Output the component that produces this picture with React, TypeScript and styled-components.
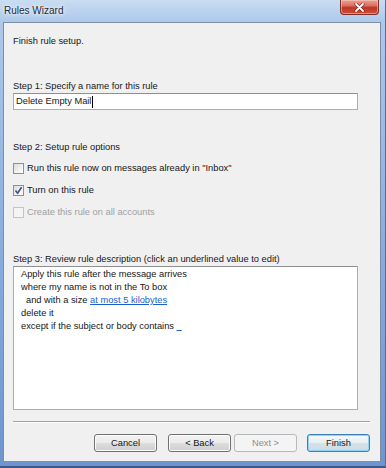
import styled, { createGlobalStyle } from 'styled-components';

const GlobalStyle = createGlobalStyle`
    html, body {
        margin: 0;
        padding: 0;
        background: #ffffff;
    }
    body {
        font-family: "Liberation Sans", Arial, sans-serif;
    }
`;

const Window = styled.div`
    width: 386px;
    height: 468px;
    box-sizing: border-box;
    display: flex;
    flex-flow: column nowrap;
    background: linear-gradient(180deg, #c9ddf2 0px, #adc8ea 22px, #84a9dc 60%, #6d95cf 100%);
    border-right: 1px solid #4f6f9e;
    border-bottom: 2px solid #3d5a86;
    padding: 0 4px 4px 3px;
`;

const TitleBar = styled.div`
    height: 22px;
    display: flex;
    align-items: flex-start;
    justify-content: space-between;
    flex-shrink: 0;
`;

const Title = styled.span`
    font-size: 10px;
    color: #1e2a3a;
    margin: 5px 0 0 1px;
    text-shadow: 0 0 6px #ffffff, 0 0 3px #ffffff;
`;

const CloseButton = styled.div`
    width: 39px;
    height: 15px;
    margin-right: 2px;
    box-sizing: border-box;
    border: 1px solid #7a2f28;
    border-top: none;
    border-radius: 0 0 4px 4px;
    background: linear-gradient(180deg, #e9a497 0%, #d9705f 40%, #c0352a 55%, #cf5034 100%);
    box-shadow: inset 0 0 0 1px rgba(255, 210, 200, 0.5);
    display: flex;
    align-items: center;
    justify-content: center;
`;

const Client = styled.div`
    flex: 1;
    display: flex;
    flex-flow: column nowrap;
    background: #f0f0f0;
    border: 1px solid #7d8ea6;
    padding: 0 9px 0 9px;
    font-size: 9.3px;
    color: #161616;
`;

const Text = styled.div<{ $top: number }>`
    margin-top: ${(p) => p.$top}px;
    line-height: 13px;
    white-space: nowrap;
`;

const NameInput = styled.div`
    margin-top: 0;
    width: 345px;
    height: 17px;
    box-sizing: border-box;
    background: #ffffff;
    border: 1px solid #abadb3;
    border-top-color: #8e8f8f;
    display: flex;
    align-items: center;
    padding-left: 2px;
    line-height: 13px;
`;

const Caret = styled.span`
    display: inline-block;
    width: 1px;
    height: 12px;
    background: #000000;
    margin-left: 1px;
`;

const Options = styled.div`
    margin-top: 8px;
    display: flex;
    flex-flow: column nowrap;
    gap: 10px;
`;

const OptionRow = styled.label<{ $disabled?: boolean }>`
    display: flex;
    align-items: center;
    gap: 3px;
    height: 12px;
    line-height: 12px;
    color: ${(p) => (p.$disabled ? '#a0a0a0' : '#161616')};
`;

const Box = styled.span<{ $disabled?: boolean }>`
    width: 11px;
    height: 11px;
    box-sizing: border-box;
    border: 1px solid ${(p) => (p.$disabled ? '#c4c4c4' : '#8e8f8f')};
    background: ${(p) =>
        p.$disabled ? '#f4f4f4' : 'linear-gradient(135deg, #dcdcdc 0%, #f2f2f2 60%, #ffffff 100%)'};
    display: flex;
    align-items: center;
    justify-content: center;
`;

const Description = styled.div`
    margin-top: 0;
    width: 345px;
    height: 144px;
    box-sizing: border-box;
    background: #ffffff;
    border: 1px solid #abadb3;
    border-top-color: #8e8f8f;
    padding: 1px 5px 0 7px;
    line-height: 13px;
`;

const Line = styled.div<{ $indent?: boolean }>`
    white-space: pre;
    padding-left: ${(p) => (p.$indent ? 5 : 0)}px;
`;

const Link = styled.span`
    color: #1a5fd0;
    text-decoration: underline;
`;

const Separator = styled.div`
    margin-top: 11px;
    width: 357px;
    height: 1px;
    background: #a0a0a0;
    border-bottom: 1px solid #ffffff;
`;

const ButtonRow = styled.div`
    margin-top: 11px;
    display: flex;
    justify-content: flex-end;
    gap: 3px;
    width: 357px;
`;

const Button = styled.div<{ $disabled?: boolean; $default?: boolean; $space?: number }>`
    width: 63px;
    height: 18px;
    box-sizing: border-box;
    margin-left: ${(p) => p.$space ?? 0}px;
    border: 1px solid ${(p) => (p.$disabled ? '#b5b9bc' : p.$default ? '#3c7fb1' : '#707070')};
    border-radius: 3px;
    background: ${(p) =>
        p.$disabled
            ? '#f4f4f4'
            : p.$default
            ? 'linear-gradient(180deg, #f4f9fc 0%, #e6eef4 50%, #d6e2ea 51%, #cedbe4 100%)'
            : 'linear-gradient(180deg, #f2f2f2 0%, #ebebeb 50%, #dddddd 51%, #cfcfcf 100%)'};
    box-shadow: ${(p) =>
        p.$default ? 'inset 0 0 0 1px #8fd3f3' : p.$disabled ? 'none' : 'inset 0 0 0 1px #fcfcfc'};
    color: ${(p) => (p.$disabled ? '#8d8d8d' : '#161616')};
    display: flex;
    align-items: center;
    justify-content: center;
    line-height: 12px;
`;

function Check() {
    return (
        <svg width="9" height="9" viewBox="0 0 9 9">
            <path d="M1.5 4.6 L3.6 7.2 L7.6 1.2" fill="none" stroke="#3d4f8a" strokeWidth="1.6" />
        </svg>
    );
}

export default function App() {
    return (
        <>
            <GlobalStyle />
            <Window>
                <TitleBar>
                    <Title>Rules Wizard</Title>
                    <CloseButton>
                        <svg width="11" height="9" viewBox="0 0 11 9">
                            <path d="M2 1 L9 8 M9 1 L2 8" stroke="#5a1d18" strokeWidth="3" strokeLinecap="round" />
                            <path d="M2 1 L9 8 M9 1 L2 8" stroke="#ffffff" strokeWidth="1.8" strokeLinecap="round" />
                        </svg>
                    </CloseButton>
                </TitleBar>
                <Client>
                    <Text $top={12}>Finish rule setup.</Text>
                    <Text $top={32}>Step 1: Specify a name for this rule</Text>
                    <NameInput>
                        Delete Empty Mail
                        <Caret />
                    </NameInput>
                    <Text $top={31}>Step 2: Setup rule options</Text>
                    <Options>
                        <OptionRow>
                            <Box />
                            Run this rule now on messages already in "Inbox"
                        </OptionRow>
                        <OptionRow>
                            <Box>
                                <Check />
                            </Box>
                            Turn on this rule
                        </OptionRow>
                        <OptionRow $disabled>
                            <Box $disabled />
                            Create this rule on all accounts
                        </OptionRow>
                    </Options>
                    <Text $top={35}>Step 3: Review rule description (click an underlined value to edit)</Text>
                    <Description>
                        <Line>Apply this rule after the message arrives</Line>
                        <Line>where my name is not in the To box</Line>
                        <Line $indent>
                            and with a size <Link>at most 5 kilobytes</Link>
                        </Line>
                        <Line>delete it</Line>
                        <Line>
                            except if the subject or body contains <Link>{'  '}</Link>
                        </Line>
                    </Description>
                    <Separator />
                    <ButtonRow>
                        <Button>Cancel</Button>
                        <Button $space={8}>&lt; Back</Button>
                        <Button $disabled>Next &gt;</Button>
                        <Button $default $space={7}>
                            Finish
                        </Button>
                    </ButtonRow>
                </Client>
            </Window>
        </>
    );
}
